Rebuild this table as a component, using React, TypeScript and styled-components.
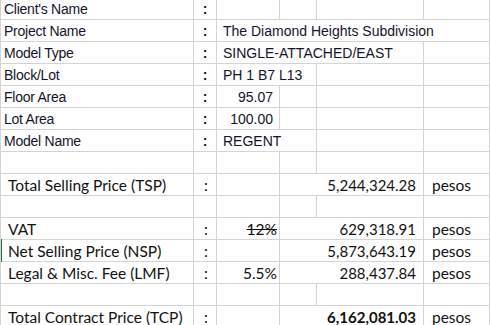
import React from "react";
import styled, { createGlobalStyle } from "styled-components";

const GRID = "#d4d4d4";

const GlobalStyle = createGlobalStyle`
  html, body {
    margin: 0;
    padding: 0;
    background: #fff;
  }
`;

const Sheet = styled.div`
  width: 490px;
  height: 325px;
  overflow: hidden;
  background: #fff;
  border-left: 1px solid ${GRID};
  box-sizing: border-box;
`;

const Rows = styled.div`
  margin-top: -2px;
  display: flex;
  flex-direction: column;
`;

const Row = styled.div<{ $selected?: boolean }>`
  position: relative;
  display: grid;
  grid-template-columns: 193px 23px 63px 37px 107px 1fr;
  height: 22px;

  &::before {
    content: "";
    display: ${(p) => (p.$selected ? "block" : "none")};
    position: absolute;
    left: -1px;
    top: -1px;
    bottom: 0;
    width: 2px;
    background: #217346;
  }
`;

const Cell = styled.div<{ $span?: number }>`
  grid-column: span ${(p) => p.$span ?? 1};
  border-right: 1px solid ${GRID};
  border-bottom: 1px solid ${GRID};
  display: flex;
  align-items: flex-end;
  white-space: nowrap;
  min-width: 0;
  overflow: visible;
`;

/* upper block: Tahoma-like labels, Arial values */
const InfoLabel = styled(Cell)`
  font-family: "Liberation Sans", Arial, sans-serif;
  font-size: 14px;
  letter-spacing: -0.25px;
  line-height: 16px;
  color: #14142a;
  padding: 0 0 2px 3px;
`;

const InfoColon = styled(Cell)`
  justify-content: center;
  font-family: "Liberation Sans", Arial, sans-serif;
  font-size: 14px;
  font-weight: 700;
  line-height: 16px;
  color: #14142a;
  padding-bottom: 2px;
`;

const InfoValue = styled(Cell)<{ $right?: boolean }>`
  justify-content: ${(p) => (p.$right ? "flex-end" : "flex-start")};
  font-family: "Liberation Sans", Arial, sans-serif;
  font-size: 14px;
  line-height: 16px;
  color: #14142a;
  padding: ${(p) => (p.$right ? "0 6px 2px 0" : "0 0 2px 6px")};
`;

/* lower block: Calibri-like computations */
const CalcText = styled(Cell)`
  font-family: Lato, "Open Sans", sans-serif;
  font-size: 15.5px;
  line-height: 18px;
  color: #111;
  padding-bottom: 1px;
`;

const CalcLabel = styled(CalcText)`
  padding-left: 7px;
`;

const CalcColon = styled(CalcText)`
  justify-content: center;
  padding-left: 2px;
`;

const Rate = styled(CalcText)<{ $struck?: boolean }>`
  justify-content: flex-end;
  padding-right: 2px;
  text-decoration: ${(p) => (p.$struck ? "line-through" : "none")};
`;

const Amount = styled(CalcText)<{ $bold?: boolean }>`
  justify-content: flex-end;
  padding-right: 7px;
  font-size: 15px;
  font-weight: ${(p) => (p.$bold ? 700 : 400)};
`;

const Unit = styled(CalcText)`
  padding-left: 8px;
`;

function EmptyRow() {
  return (
    <Row>
      <Cell />
      <Cell />
      <Cell />
      <Cell />
      <Cell />
      <Cell />
    </Row>
  );
}

type CalcRowProps = {
  label: string;
  rate?: string;
  struck?: boolean;
  amount: string;
  bold?: boolean;
  selected?: boolean;
};

function CalcRow({ label, rate, struck, amount, bold, selected }: CalcRowProps) {
  return (
    <Row $selected={selected}>
      <CalcLabel>{label}</CalcLabel>
      <CalcColon>:</CalcColon>
      <Rate $struck={struck}>{rate}</Rate>
      <Amount $span={2} $bold={bold}>
        {amount}
      </Amount>
      <Unit>pesos</Unit>
    </Row>
  );
}

export default function App() {
  return (
    <>
      <GlobalStyle />
      <Sheet>
        <Rows>
          <Row>
            <InfoLabel>Client's Name</InfoLabel>
            <InfoColon>:</InfoColon>
            <Cell />
            <Cell />
            <Cell />
            <Cell />
          </Row>
          <Row>
            <InfoLabel>Project Name</InfoLabel>
            <InfoColon>:</InfoColon>
            <InfoValue $span={4}>The Diamond Heights Subdivision</InfoValue>
          </Row>
          <Row>
            <InfoLabel>Model Type</InfoLabel>
            <InfoColon>:</InfoColon>
            <InfoValue $span={3}>SINGLE-ATTACHED/EAST</InfoValue>
            <Cell />
          </Row>
          <Row>
            <InfoLabel>Block/Lot</InfoLabel>
            <InfoColon>:</InfoColon>
            <InfoValue $span={2}>PH 1 B7 L13</InfoValue>
            <Cell />
            <Cell />
          </Row>
          <Row>
            <InfoLabel>Floor Area</InfoLabel>
            <InfoColon>:</InfoColon>
            <InfoValue $right>95.07</InfoValue>
            <Cell />
            <Cell />
            <Cell />
          </Row>
          <Row>
            <InfoLabel>Lot Area</InfoLabel>
            <InfoColon>:</InfoColon>
            <InfoValue $right>100.00</InfoValue>
            <Cell />
            <Cell />
            <Cell />
          </Row>
          <Row>
            <InfoLabel>Model Name</InfoLabel>
            <InfoColon>:</InfoColon>
            <InfoValue $span={2}>REGENT</InfoValue>
            <Cell />
            <Cell />
          </Row>
          <EmptyRow />
          <CalcRow label="Total Selling Price (TSP)" amount="5,244,324.28" />
          <EmptyRow />
          <CalcRow label="VAT" rate="12%" struck amount="629,318.91" />
          <CalcRow label="Net Selling Price (NSP)" amount="5,873,643.19" selected />
          <CalcRow label="Legal & Misc. Fee (LMF)" rate="5.5%" amount="288,437.84" />
          <EmptyRow />
          <CalcRow label="Total Contract Price (TCP)" amount="6,162,081.03" bold />
        </Rows>
      </Sheet>
    </>
  );
}
